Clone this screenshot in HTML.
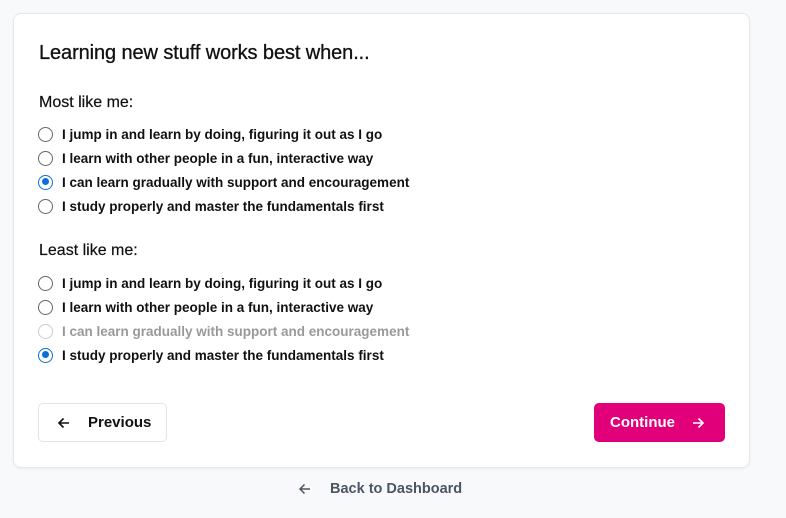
<!DOCTYPE html><html><head><style>
body{margin:0;background:#f8f9fb;font-family:"Liberation Sans",sans-serif;width:786px;height:518px;position:relative;overflow:hidden;color:#111}
.card{position:absolute;left:13px;top:13px;width:735px;height:453px;background:#fff;border:1px solid #e5e7eb;border-radius:8px;box-shadow:0 1px 2px rgba(0,0,0,.05)}
.t{position:absolute;left:25px;top:28px;font-size:20px;letter-spacing:-0.1px;-webkit-text-stroke:0.3px #111}
.h{position:absolute;left:25px;font-size:16px;-webkit-text-stroke:0.2px #111}
.o{position:absolute;left:24px;font-size:13.5px;font-weight:600;display:flex;align-items:center;height:20px;letter-spacing:0px}
.r{border:1px solid #666;border-radius:50%;margin-right:9px;box-sizing:border-box;background:#fff;position:relative;flex:none;width:15px;height:15px}
.r.c{border:1.5px solid #0b6fd3}.r.c:after{content:"";position:absolute;left:2.5px;top:2.5px;width:7px;height:7px;border-radius:50%;background:#0b6fd3}
.d{color:#999}.d .r{border-color:#ccc}
.btn{position:absolute;top:389px;height:39px;border-radius:5px;font-size:15px;font-weight:bold;display:flex;align-items:center;box-sizing:border-box}
</style></head><body>
<div class="card">
<div class="t">Learning new stuff works best when...</div>
<div class="h" style="top:80px">Most like me:</div>
<div class="o" style="top:110px"><span class="r"></span>I jump in and learn by doing, figuring it out as I go</div>
<div class="o" style="top:134px"><span class="r"></span>I learn with other people in a fun, interactive way</div>
<div class="o" style="top:158px"><span class="r c"></span>I can learn gradually with support and encouragement</div>
<div class="o" style="top:182px"><span class="r"></span>I study properly and master the fundamentals first</div>
<div class="h" style="top:228px">Least like me:</div>
<div class="o" style="top:259px"><span class="r"></span>I jump in and learn by doing, figuring it out as I go</div>
<div class="o" style="top:283px"><span class="r"></span>I learn with other people in a fun, interactive way</div>
<div class="o d" style="top:307px"><span class="r"></span>I can learn gradually with support and encouragement</div>
<div class="o" style="top:331px"><span class="r c"></span>I study properly and master the fundamentals first</div>
<div class="btn" style="left:24px;width:129px;border:1px solid #e2e4e8;background:#fff;color:#111;padding-left:18px"><svg width="14" height="14" viewBox="0 0 14 14" fill="none" stroke="#111" stroke-width="1.6"><path d="M12 7H2M6.5 2.5L2 7l4.5 4.5"/></svg><span style="margin-left:17px">Previous</span></div>
<div class="btn" style="left:580px;width:131px;background:#e2007a;color:#fff;padding-left:16px">Continue<svg style="margin-left:16px" width="14" height="14" viewBox="0 0 14 14" fill="none" stroke="#fff" stroke-width="1.6"><path d="M2 7h10M7.5 2.5L12 7l-4.5 4.5"/></svg></div>
</div>
<div style="position:absolute;left:298px;top:481px;display:flex;align-items:center;font-size:14.5px;color:#4b5563;font-weight:600"><svg width="14" height="14" viewBox="0 0 14 14" fill="none" stroke="#4b5563" stroke-width="1.5"><path d="M12 7H2M6.5 2.5L2 7l4.5 4.5"/></svg><span style="margin-left:18px">Back to Dashboard</span></div>
</body></html>
